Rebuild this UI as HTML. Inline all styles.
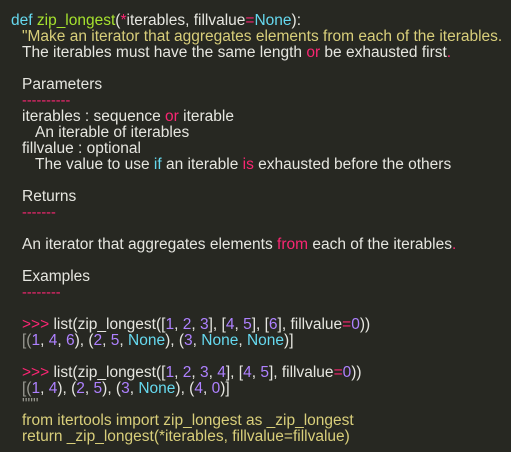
<!DOCTYPE html>
<html><head><style>
html,body{margin:0;padding:0;background:#272822;}
body{width:511px;height:452px;overflow:hidden;}
.c{padding:13px 0 0 11px;font-family:"Liberation Sans",sans-serif;font-size:15.5px;line-height:16px;color:#e6e6e0;}
.c div{height:16px;white-space:pre}
.i{padding-left:11px}.j{padding-left:24px}
.k{color:#66d9ef}.f{color:#a6e22e}.p{color:#f92672}.s{color:#d8ce7a}.n{color:#ae81ff}.g{color:#9a9a92}
.d{font-size:14.5px}
</style></head><body><div class="c"><div><span class="k">def</span> <span class="f">zip_longest</span>(<span class="p">*</span>iterables, fillvalue<span class="p">=</span><span class="k">None</span>):</div><div class="i"><span class="s">"Make an iterator that aggregates elements from each of the iterables.</span></div><div class="i">The iterables must have the same length <span class="p">or</span> be exhausted first<span class="p">.</span></div><div></div><div class="i">Parameters</div><div class="i"><span class="p d">----------</span></div><div class="i">iterables : sequence <span class="p">or</span> iterable</div><div class="j">An iterable of iterables</div><div class="i">fillvalue : optional</div><div class="j">The value to use <span class="k">if</span> an iterable <span class="p">is</span> exhausted before the others</div><div></div><div class="i">Returns</div><div class="i"><span class="p d">-------</span></div><div></div><div class="i">An iterator that aggregates elements <span class="p">from</span> each of the iterables<span class="p">.</span></div><div></div><div class="i">Examples</div><div class="i"><span class="p d">--------</span></div><div></div><div class="i"><span class="p">&gt;&gt;&gt;</span> list(zip_longest([<span class="n">1</span>, <span class="n">2</span>, <span class="n">3</span>], [<span class="n">4</span>, <span class="n">5</span>], [<span class="n">6</span>], fillvalue<span class="p">=</span><span class="n">0</span>))</div><div class="i"><span class="g">[(</span><span class="n">1</span>, <span class="n">4</span>, <span class="n">6</span>), (<span class="n">2</span>, <span class="n">5</span>, <span class="k">None</span>), (<span class="n">3</span>, <span class="k">None</span>, <span class="k">None</span>)]</div><div></div><div class="i"><span class="p">&gt;&gt;&gt;</span> list(zip_longest([<span class="n">1</span>, <span class="n">2</span>, <span class="n">3</span>, <span class="n">4</span>], [<span class="n">4</span>, <span class="n">5</span>], fillvalue<span class="p">=</span><span class="n">0</span>))</div><div class="i"><span class="g">[(</span><span class="n">1</span>, <span class="n">4</span>), (<span class="n">2</span>, <span class="n">5</span>), (<span class="n">3</span>, <span class="k">None</span>), (<span class="n">4</span>, <span class="n">0</span>)]</div><div class="i"><span class="g">"""</span></div><div class="i"><span class="s">from itertools import zip_longest as _zip_longest</span></div><div class="i"><span class="s">return _zip_longest(*iterables, fillvalue=fillvalue)</span></div></div></body></html>
